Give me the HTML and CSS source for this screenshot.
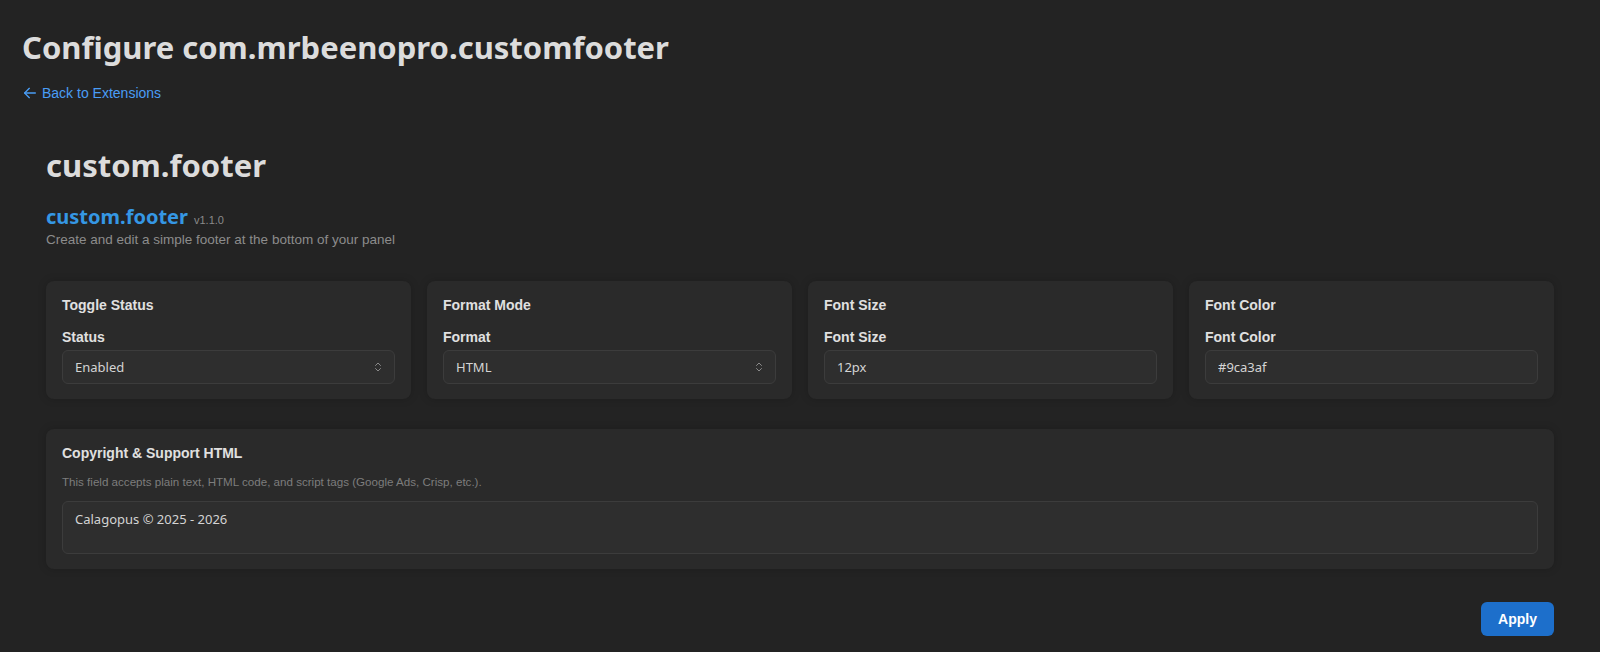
FILE: index.html
```html
<!DOCTYPE html>
<html>
	<head>
		<meta charset="utf-8">
		<title>Configure com.mrbeenopro.customfooter</title>
		<link rel="stylesheet" href="styles.css">
	</head>
	<body>
		<div class="page">
			<h1 class="page-title">Configure com.mrbeenopro.customfooter</h1>
			<a class="back-link" href="#">
				<svg width="16" height="16" viewBox="0 0 24 24" fill="none" stroke="currentColor" stroke-width="2" stroke-linecap="round" stroke-linejoin="round"><path d="M20 12H4"/><path d="M11 19l-7-7 7-7"/></svg>
				Back to Extensions
			</a>

			<section class="ext">
				<h2 class="ext-heading">custom.footer</h2>
				<div class="ext-meta">
					<span class="ext-name">custom.footer</span>
					<span class="ext-version">v1.1.0</span>
				</div>
				<p class="ext-desc">Create and edit a simple footer at the bottom of your panel</p>

				<div class="card-grid">
					<div class="card">
						<div class="card-title">Toggle Status</div>
						<label class="field-label">Status</label>
						<div class="select">
							<span>Enabled</span>
							<svg class="chev" width="12" height="12" viewBox="0 0 24 24" fill="none" stroke="currentColor" stroke-width="2" stroke-linecap="round" stroke-linejoin="round"><path d="M7 15l5 5 5-5"/><path d="M7 9l5-5 5 5"/></svg>
						</div>
					</div>
					<div class="card">
						<div class="card-title">Format Mode</div>
						<label class="field-label">Format</label>
						<div class="select">
							<span>HTML</span>
							<svg class="chev" width="12" height="12" viewBox="0 0 24 24" fill="none" stroke="currentColor" stroke-width="2" stroke-linecap="round" stroke-linejoin="round"><path d="M7 15l5 5 5-5"/><path d="M7 9l5-5 5 5"/></svg>
						</div>
					</div>
					<div class="card">
						<div class="card-title">Font Size</div>
						<label class="field-label">Font Size</label>
						<input class="input" type="text" value="12px">
					</div>
					<div class="card">
						<div class="card-title">Font Color</div>
						<label class="field-label">Font Color</label>
						<input class="input" type="text" value="#9ca3af">
					</div>
				</div>

				<div class="card">
					<div class="card-title">Copyright &amp; Support HTML</div>
					<p class="field-help">This field accepts plain text, HTML code, and script tags (Google Ads, Crisp, etc.).</p>
					<textarea class="input textarea">Calagopus © 2025 - 2026</textarea>
				</div>

				<div class="actions">
					<button class="btn-apply">Apply</button>
				</div>
			</section>
		</div>
	</body>
</html>
```

FILE: styles.css
```css
* {
	box-sizing: border-box;
}
body {
	margin: 0;
	background: #232323;
	color: #dcdcdc;
	font-family: "Liberation Sans", Arial, sans-serif;
}
.page {
	padding: 23px 22px 0;
}
.page-title {
	margin: 0;
	font-family: "Noto Sans", sans-serif;
	font-size: 31px;
	font-weight: 700;
	line-height: 48px;
	color: #dcdcdc;
}
.back-link {
	display: inline-flex;
	align-items: center;
	gap: 4px;
	margin-top: 14px;
	font-size: 14px;
	color: #4a9df5;
	text-decoration: none;
}
.ext {
	padding: 0 24px;
}
.ext-heading {
	margin: 38px 0 0;
	font-family: "Noto Sans", sans-serif;
	font-size: 31px;
	font-weight: 700;
	line-height: 44px;
	color: #dcdcdc;
}
.ext-meta {
	margin-top: 16px;
	display: flex;
	align-items: baseline;
	gap: 6px;
}
.ext-name {
	font-family: "Noto Sans", sans-serif;
	font-size: 20px;
	font-weight: 700;
	color: #3597e4;
}
.ext-version {
	font-size: 11px;
	color: #8a8a8a;
}
.ext-desc {
	margin: 2px 0 0;
	font-size: 13.5px;
	color: #8c8c8c;
}
.card-grid {
	margin-top: 34px;
	display: grid;
	grid-template-columns: repeat(4, 1fr);
	gap: 16px;
}
.card {
	background: #2a2a2a;
	border-radius: 8px;
	padding: 16px 16px 15px;
	box-shadow: 0 0 8px rgba(0, 0, 0, 0.18);
}
.card-grid + .card {
	margin-top: 30px;
}
.card-title {
	font-size: 14px;
	font-weight: 700;
	line-height: 16px;
	color: #e0e0e0;
}
.field-label {
	display: block;
	margin-top: 16px;
	margin-bottom: 5px;
	font-size: 14px;
	font-weight: 700;
	line-height: 16px;
	color: #e0e0e0;
}
.select,
.input {
	display: flex;
	align-items: center;
	justify-content: space-between;
	width: 100%;
	height: 34px;
	padding: 0 12px;
	background: #2e2e2e;
	border: 1px solid #3c3c3c;
	border-radius: 6px;
	font-family: "Noto Sans", sans-serif;
	font-size: 13px;
	color: #d4d4d4;
}
.input {
	outline: none;
}
.chev {
	color: #8a8a8a;
	margin-right: -2px;
}
.field-help {
	margin: 14px 0 13px;
	font-size: 11.6px;
	color: #7d7d7d;
}
.textarea {
	display: block;
	height: 53px;
	padding: 8px 12px;
	resize: none;
	line-height: 18px;
}
.actions {
	display: flex;
	justify-content: flex-end;
	margin-top: 33px;
}
.btn-apply {
	height: 34px;
	padding: 0 17px;
	border: 0;
	border-radius: 6px;
	background: #1d6fcb;
	color: #fff;
	font-family: "Liberation Sans", Arial, sans-serif;
	font-size: 14px;
	font-weight: 700;
}
```
